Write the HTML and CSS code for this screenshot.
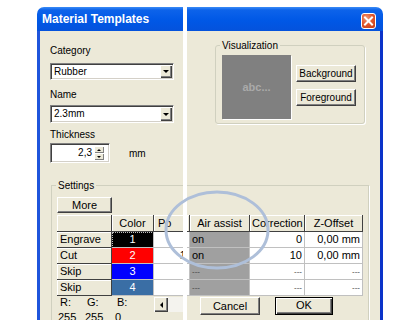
FILE: index.html
```html
<!DOCTYPE html>
<html lang="en">
<head>
    <meta charset="UTF-8">
    <title>Material Templates</title>
    <link rel="stylesheet" href="styles.css">
</head>
<body>
    <div class="stage">
        <div class="window">
            <!-- left part of the dialog -->
            <div class="pane pane-left">
                <div class="titlebar"><span class="title">Material Templates</span></div>
                <div class="body">
                    <div class="lbl lbl-first">Category</div>
                    <div class="combo"><span class="combo-text">Rubber</span><i class="drop"></i></div>
                    <div class="lbl lbl-name">Name</div>
                    <div class="combo combo-2"><span class="combo-text">2.3mm</span><i class="drop"></i></div>
                    <div class="lbl lbl-thick">Thickness</div>
                    <div class="spin-row">
                        <div class="spin">
                            <span class="spin-val">2,3</span>
                            <div class="spin-btns"><b class="up"></b><b class="down"></b></div>
                        </div>
                        <span class="unit">mm</span>
                    </div>
                    <div class="group settings-l">
                        <span class="legend">Settings</span>
                        <div class="btn more">More</div>
                        <div class="grid grid-l">
                            <div class="c fx"></div>
                            <div class="c fx hd">Color</div>
                            <div class="c fx hd hd-po">Po</div>

                            <div class="c fx row">Engrave</div>
                            <div class="c col focus" style="background:#000000">1</div>
                            <div class="c r">80</div>

                            <div class="c fx row">Cut</div>
                            <div class="c col" style="background:#ff0000">2</div>
                            <div class="c r">100</div>

                            <div class="c fx row">Skip</div>
                            <div class="c col" style="background:#0000ff">3</div>
                            <div class="c r"></div>

                            <div class="c fx row">Skip</div>
                            <div class="c col" style="background:#3a6ea5">4</div>
                            <div class="c r"></div>
                        </div>
                        <div class="rgb-row">
                            <div class="rgb">
                                <span class="rgb-r">R:</span><span class="rgb-g">G:</span><span>B:</span>
                            </div>
                            <div class="hscroll"><i class="arrow-left"></i></div>
                        </div>
                        <div class="rgb rgb-vals">
                            <span class="rgb-r">255</span><span class="rgb-g">255</span><span>0</span>
                        </div>
                    </div>
                </div>
            </div>

            <!-- right part of the dialog -->
            <div class="pane pane-right">
                <div class="titlebar">
                    <span class="close">
                        <svg width="13" height="14" viewBox="0 0 13 14"><path d="M3 3.5 L10 10.5 M10 3.5 L3 10.5" stroke="#fff" stroke-width="2" stroke-linecap="square"/></svg>
                    </span>
                </div>
                <div class="body">
                    <div class="group viz">
                        <span class="legend">Visualization</span>
                        <div class="viz-inner">
                            <div class="preview">abc...</div>
                            <div class="viz-btns">
                                <div class="btn">Background</div>
                                <div class="btn">Foreground</div>
                            </div>
                        </div>
                    </div>
                    <div class="group settings-r">
                        <div class="grid grid-r">
                            <div class="c fx edge"></div>
                            <div class="c fx hd">Air assist</div>
                            <div class="c fx hd">Correction</div>
                            <div class="c fx hd">Z-Offset</div>

                            <div class="c edge"></div>
                            <div class="c gray">on</div>
                            <div class="c r">0</div>
                            <div class="c r">0,00 mm</div>

                            <div class="c edge"></div>
                            <div class="c gray">on</div>
                            <div class="c r">10</div>
                            <div class="c r">0,00 mm</div>

                            <div class="c edge"></div>
                            <div class="c gray dash">---</div>
                            <div class="c r dash">---</div>
                            <div class="c r dash">---</div>

                            <div class="c edge"></div>
                            <div class="c gray dash">---</div>
                            <div class="c r dash">---</div>
                            <div class="c r dash">---</div>
                        </div>
                        <div class="actions">
                            <div class="btn cancel">Cancel</div>
                            <div class="btn ok">OK</div>
                        </div>
                    </div>
                </div>
            </div>
        </div>

        <svg class="halo" width="420" height="320" viewBox="0 0 420 320">
            <ellipse cx="217" cy="230" rx="51" ry="38" fill="none" stroke="#aebfd9" stroke-width="3"/>
        </svg>
    </div>
</body>
</html>
```

FILE: styles.css
```css
body {
    margin: 0;
    background: #fff;
    font-family: "Liberation Sans", Arial, sans-serif;
    font-size: 10px;
    color: #000;
}
.stage {
    position: relative;
    width: 420px;
    height: 320px;
    overflow: hidden;
    padding: 7px 0 0 37px;
    box-sizing: border-box;
}
.window {
    display: flex;
    gap: 4px;
    height: 313px;
}
.pane {
    display: flex;
    flex-direction: column;
    overflow: hidden;
}
.pane-left {
    width: 146px;
}
.pane-right {
    width: 196px;
}
.titlebar {
    flex: none;
    height: 24px;
    display: flex;
    align-items: center;
    background: linear-gradient(#3b8cf6 0, #0d63ea 3px, #0058e6 55%, #0452dc 100%);
}
.pane-left .titlebar {
    border-top-left-radius: 7px;
}
.pane-right .titlebar {
    border-top-right-radius: 7px;
    justify-content: flex-end;
    padding-right: 7px;
}
.title {
    color: #fff;
    font-weight: bold;
    font-size: 12px;
    padding-left: 5px;
}
.close {
    width: 15px;
    height: 16px;
    box-sizing: border-box;
    border: 1px solid #fff;
    border-radius: 3px;
    background: radial-gradient(circle at 35% 30%, #f09a7a 0, #e2592f 45%, #c23a14 100%);
    display: flex;
    align-items: center;
    justify-content: center;
    margin-top: 3px;
}
.body {
    flex: 1;
    background: #ece9d8;
}
.pane-left .body {
    border-left: 3px solid #1f55dc;
    padding-left: 10px;
}
.pane-right .body {
    border-right: 3px solid #0b33c9;
}

/* labels and inputs */
.lbl {
    height: 13px;
    line-height: 13px;
}
.lbl-first {
    margin-top: 13px;
}
.lbl-name {
    margin-top: 8px;
}
.lbl-thick {
    margin-top: 5px;
}
.combo {
    margin-top: 6px;
    width: 124px;
    height: 17px;
    box-sizing: border-box;
    display: flex;
    align-items: stretch;
    background: #fff;
    border: 1px solid;
    border-color: #808080 #fff #fff #808080;
    box-shadow: inset 1px 1px #404040, inset -1px -1px #d4d0c8;
    padding: 1px;
}
.combo-2 {
    margin-top: 4px;
    height: 18px;
}
.combo-text {
    flex: 1;
    padding-left: 2px;
    line-height: 14px;
}
.drop {
    width: 12px;
    background: #ece9d8;
    box-shadow: inset 1px 1px #fff, inset -1px -1px #404040, inset -2px -2px #808080;
    display: flex;
    align-items: center;
    justify-content: center;
}
.drop::after {
    content: "";
    border-left: 3px solid transparent;
    border-right: 3px solid transparent;
    border-top: 3px solid #000;
}
.spin-row {
    margin-top: 2px;
    height: 20px;
    display: flex;
    align-items: center;
}
.spin {
    width: 60px;
    height: 20px;
    box-sizing: border-box;
    display: flex;
    background: #fff;
    border: 1px solid;
    border-color: #808080 #fff #fff #808080;
    box-shadow: inset 1px 1px #404040, inset -1px -1px #d4d0c8;
    padding: 2px 2px 2px 0;
}
.spin-val {
    flex: 1;
    text-align: right;
    padding-right: 2px;
    line-height: 14px;
}
.spin-btns {
    width: 10px;
    display: flex;
    flex-direction: column;
    margin-right: 3px;
}
.spin-btns b {
    flex: 1;
    background: #ece9d8;
    box-shadow: inset 1px 1px #fff, inset -1px -1px #808080;
    display: flex;
    align-items: center;
    justify-content: center;
}
.spin-btns .up::after {
    content: "";
    border-left: 2px solid transparent;
    border-right: 2px solid transparent;
    border-bottom: 2px solid #000;
}
.spin-btns .down::after {
    content: "";
    border-left: 2px solid transparent;
    border-right: 2px solid transparent;
    border-top: 2px solid #000;
}
.unit {
    margin-left: 19px;
}

/* group boxes */
.group {
    box-sizing: border-box;
    border: 1px solid #d0d0bf;
    box-shadow: 1px 1px 0 #fff;
}
.legend {
    display: block;
    width: fit-content;
    margin: -7px 0 0 4px;
    padding: 0 2px;
    line-height: 13px;
    background: #ece9d8;
}
.settings-l {
    margin: 22px 0 0 1px;
    width: 200px;
    height: 140px;
    border-right: none;
    border-bottom: none;
}
.viz {
    margin: 14px 0 0 28px;
    width: 150px;
    height: 79px;
    border-radius: 3px;
}
.viz-inner {
    display: flex;
    margin: 3px 0 0 6px;
}
.preview {
    width: 69px;
    height: 64px;
    background: #808080;
    color: #aaaaaa;
    font-weight: bold;
    font-size: 11px;
    display: flex;
    align-items: center;
    justify-content: center;
    box-shadow: 1px 1px 0 #fff;
}
.viz-btns {
    margin-left: 5px;
    display: flex;
    flex-direction: column;
    gap: 7px;
    padding-top: 10px;
}
.settings-r {
    margin-top: 61px;
    width: 182px;
    height: 140px;
    border-left: none;
    border-bottom: none;
    padding-top: 29px;
}

/* buttons */
.btn {
    box-sizing: border-box;
    width: 60px;
    height: 17px;
    line-height: 15px;
    text-align: center;
    background: #ece9d8;
    border: 1px solid;
    border-color: #fff #404040 #404040 #fff;
    box-shadow: inset -1px -1px #808080;
}
.more {
    width: 55px;
    height: 16px;
    line-height: 14px;
    margin: 5px 0 0 5px;
    font-size: 11px;
}
.actions {
    display: flex;
    margin: 1px 0 0 13px;
    gap: 15px;
}
.cancel {
    height: 18px;
    line-height: 16px;
    font-size: 11px;
}
.ok {
    width: 58px;
    height: 18px;
    line-height: 14px;
    font-size: 11px;
    border: 1px solid #000;
    box-shadow: inset 1px 1px #fff, inset -1px -1px #404040, inset -2px -2px #808080;
}

/* string grids */
.grid {
    display: grid;
    grid-template-rows: 17px repeat(4, 16px);
    margin-top: 2px;
}
.grid-l {
    margin-left: 5px;
    grid-template-columns: 55px 42px 47px;
}
.grid-r {
    margin-top: 0;
    grid-template-columns: 3px 60px 55px 58px;
}
.c {
    box-sizing: border-box;
    border-right: 1px solid #c0c0c0;
    border-bottom: 1px solid #c0c0c0;
    background: #fff;
    line-height: 15px;
    padding: 0 2px;
    white-space: nowrap;
    overflow: hidden;
}
.edge {
    padding: 0;
}
.fx {
    background: #ece9d8;
    border-color: #404040;
    box-shadow: inset 1px 1px #fff;
}
.hd {
    text-align: center;
    font-size: 11px;
    line-height: 16px;
}
.hd-po {
    text-align: left;
    padding-left: 4px;
}
.row {
    padding-left: 3px;
    font-size: 11px;
}
.col {
    color: #fff;
    text-align: center;
    font-size: 11px;
}
.focus {
    outline: 1px dotted #c0c0c0;
    outline-offset: -1px;
}
.r {
    text-align: right;
    font-size: 11px;
}
.gray {
    background: #a0a0a0;
    border-color: #a0a0a0 #c0c0c0 #c0c0c0 #a0a0a0;
    font-size: 11px;
}
.dash {
    font-size: 8px;
    color: #404040;
}

/* colour readout under the grid */
.rgb-row {
    display: flex;
    margin-left: 5px;
    margin-top: 1px;
    height: 15px;
}
.rgb {
    width: 97px;
    display: flex;
    padding-left: 3px;
    box-sizing: border-box;
    line-height: 11px;
    font-size: 11px;
}
.rgb-r {
    width: 27px;
}
.rgb-g {
    width: 30px;
}
.rgb-vals {
    margin-left: 5px;
    padding-left: 1px;
}
.hscroll {
    flex: 1;
    display: flex;
    background: #f4f3ee;
}
.arrow-left {
    width: 14px;
    background: #ece9d8;
    box-shadow: inset 1px 1px #fff, inset -1px -1px #404040, inset -2px -2px #808080;
    display: flex;
    align-items: center;
    justify-content: center;
}
.arrow-left::after {
    content: "";
    border-top: 3px solid transparent;
    border-bottom: 3px solid transparent;
    border-right: 3px solid #000;
}

.halo {
    position: absolute;
    left: 0;
    top: 0;
    pointer-events: none;
}
```
